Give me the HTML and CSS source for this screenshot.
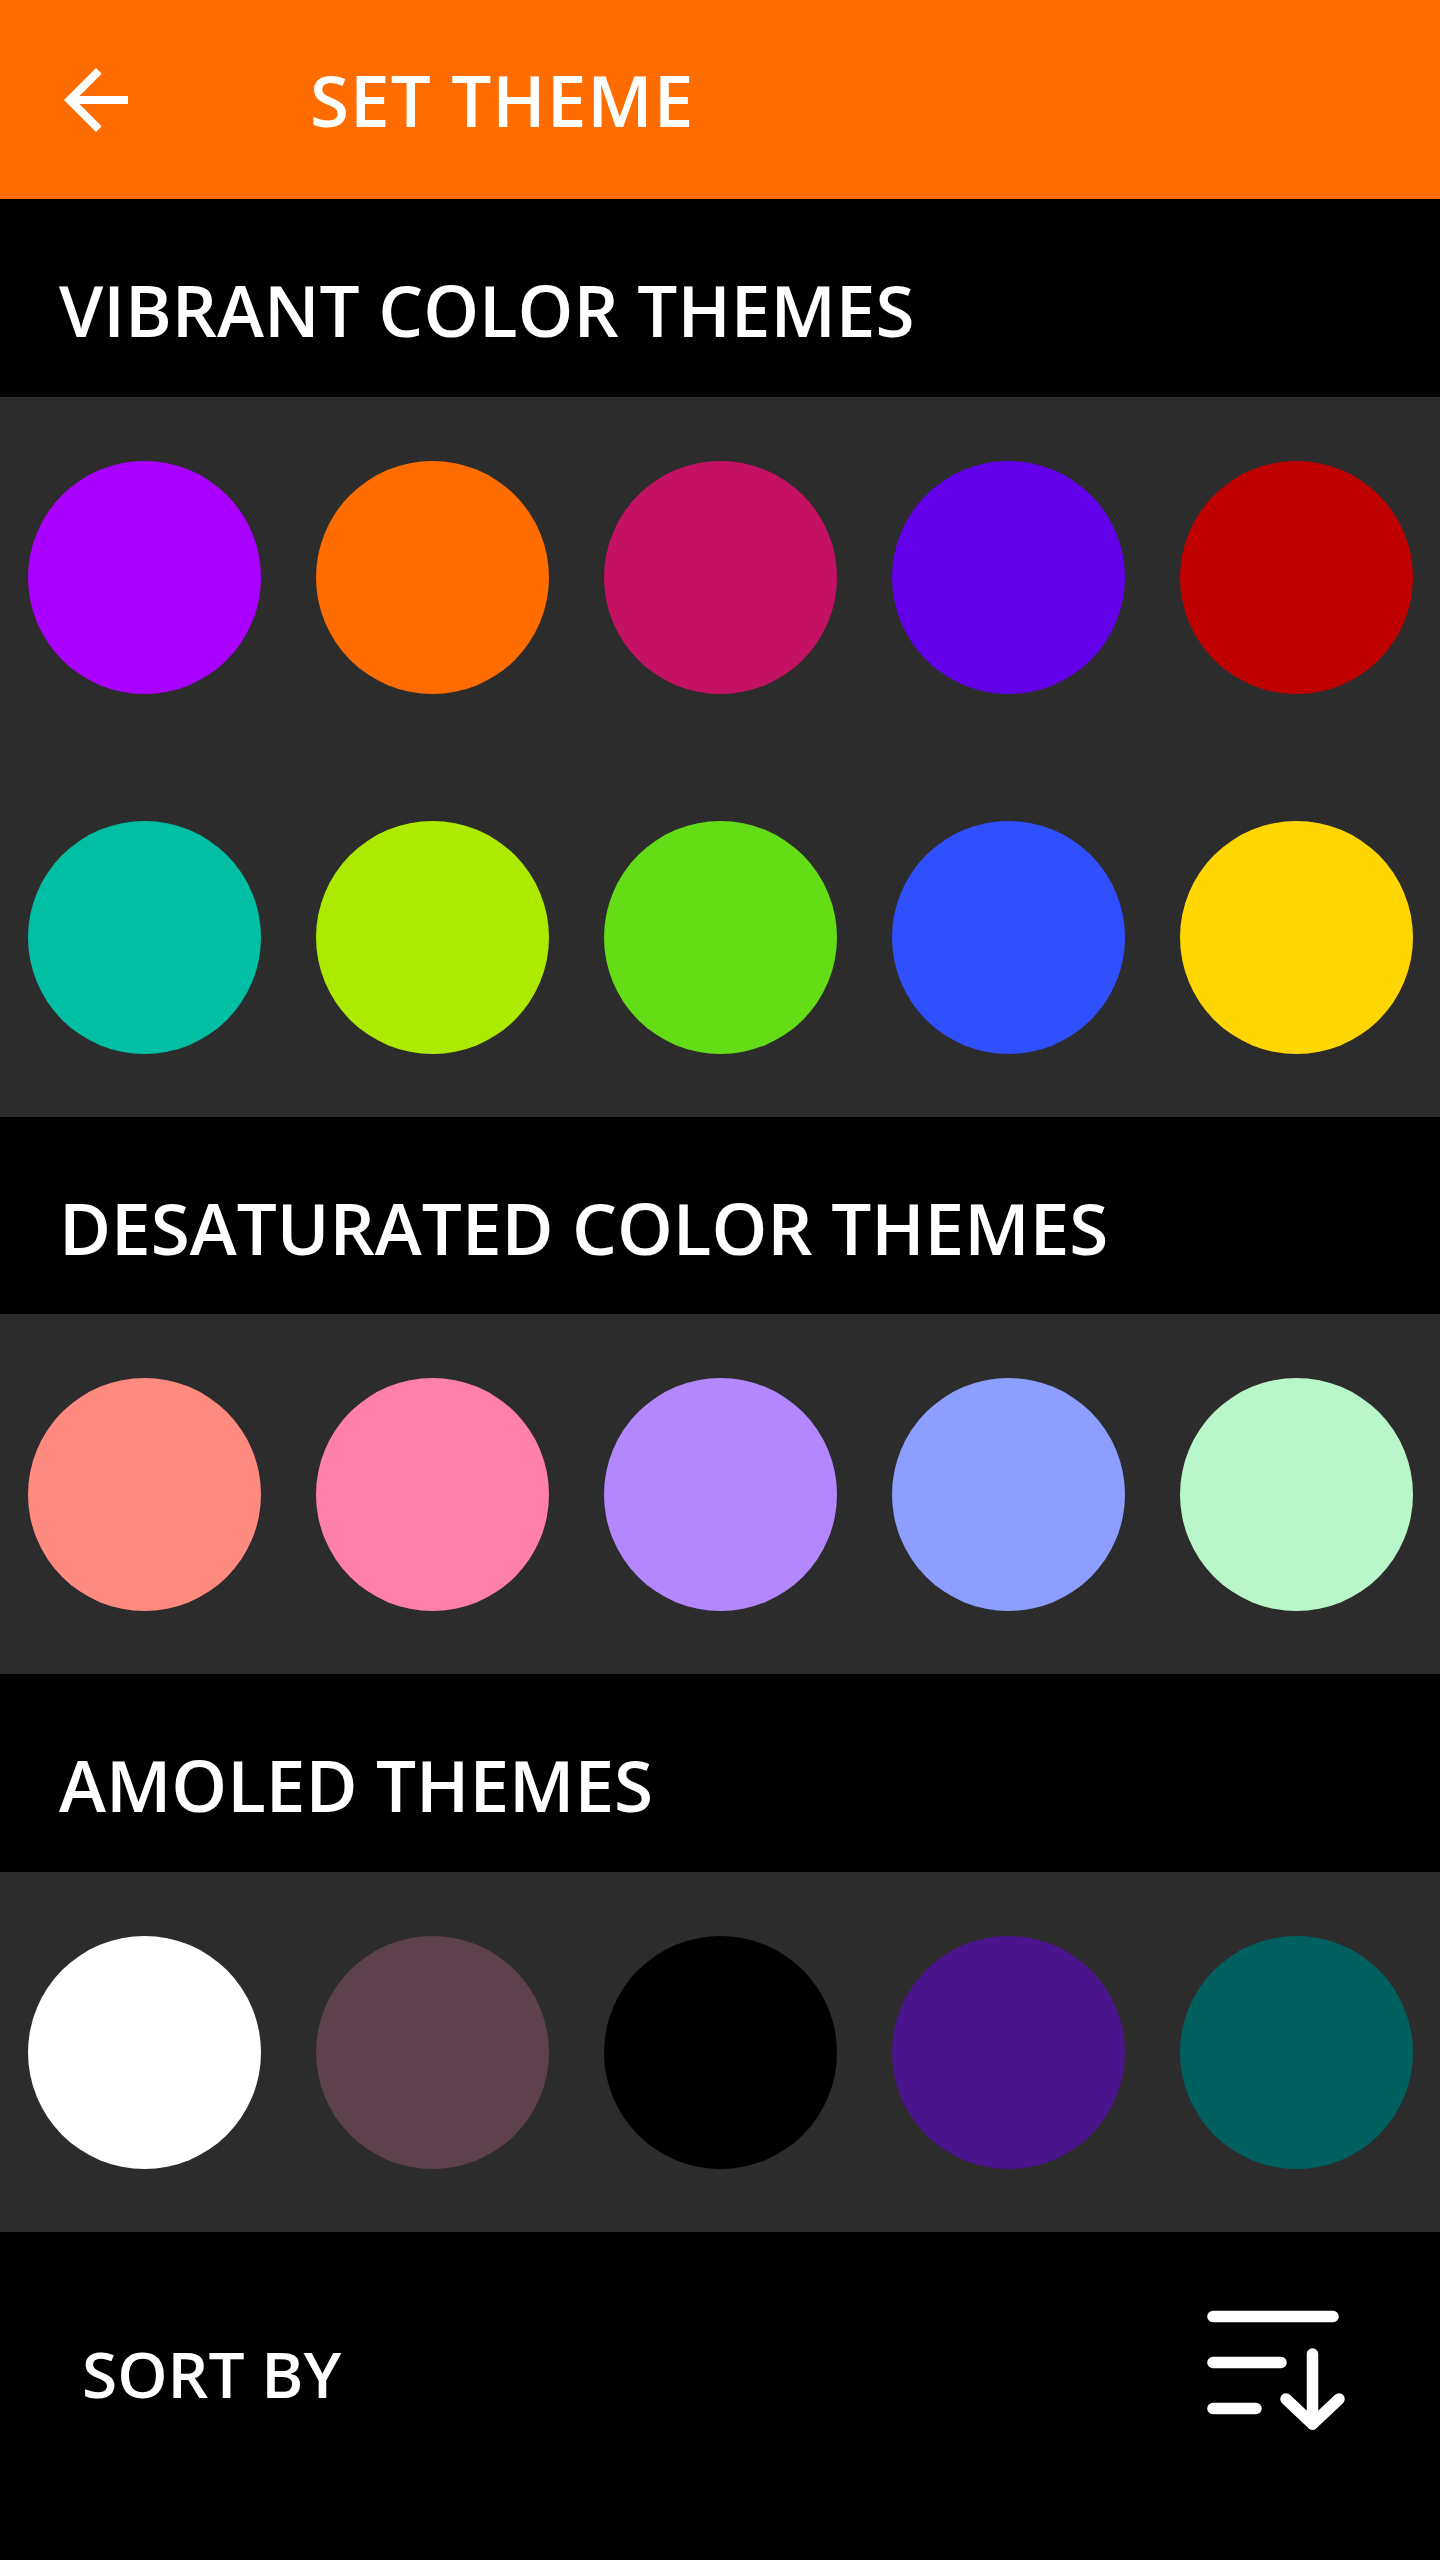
FILE: index.html
```html
<!DOCTYPE html>
<html lang="en">
<head>
<meta charset="utf-8">
<title>Set Theme</title>
<link rel="stylesheet" href="styles.css">
</head>
<body>
<div class="screen">
  <header class="appbar">
    <svg class="back-icon" viewBox="0 0 24 24" width="96" height="96" aria-hidden="true">
      <path d="M20 11H7.83l5.59-5.59L12 4l-8 8 8 8 1.41-1.41L7.83 13H20v-2z" fill="#ffffff"/>
    </svg>
    <h1 class="appbar-title">SET THEME</h1>
  </header>

  <section class="theme-group">
    <h2 class="group-title">VIBRANT COLOR THEMES</h2>
    <div class="swatch-grid">
      <div class="cell"><span class="swatch c-purple"></span></div>
      <div class="cell"><span class="swatch c-orange"></span></div>
      <div class="cell"><span class="swatch c-pink"></span></div>
      <div class="cell"><span class="swatch c-deeppurple"></span></div>
      <div class="cell"><span class="swatch c-red"></span></div>
      <div class="cell"><span class="swatch c-teal"></span></div>
      <div class="cell"><span class="swatch c-lime"></span></div>
      <div class="cell"><span class="swatch c-green"></span></div>
      <div class="cell"><span class="swatch c-indigo"></span></div>
      <div class="cell"><span class="swatch c-yellow"></span></div>
    </div>
  </section>

  <section class="theme-group">
    <h2 class="group-title group-title-mid">DESATURATED COLOR THEMES</h2>
    <div class="swatch-grid">
      <div class="cell"><span class="swatch d-red"></span></div>
      <div class="cell"><span class="swatch d-pink"></span></div>
      <div class="cell"><span class="swatch d-purple"></span></div>
      <div class="cell"><span class="swatch d-indigo"></span></div>
      <div class="cell"><span class="swatch d-green"></span></div>
    </div>
  </section>

  <section class="theme-group">
    <h2 class="group-title">AMOLED THEMES</h2>
    <div class="swatch-grid">
      <div class="cell"><span class="swatch a-white"></span></div>
      <div class="cell"><span class="swatch a-mauve"></span></div>
      <div class="cell"><span class="swatch a-black"></span></div>
      <div class="cell"><span class="swatch a-purple"></span></div>
      <div class="cell"><span class="swatch a-cyan"></span></div>
    </div>
  </section>

  <footer class="sortbar">
    <span class="sort-label">SORT BY</span>
    <svg class="sort-icon" viewBox="0 0 150 140" width="150" height="140" aria-hidden="true">
      <g fill="none" stroke="#ffffff" stroke-width="11.5" stroke-linecap="round" stroke-linejoin="round">
        <line x1="13" y1="13.5" x2="133" y2="13.5"/>
        <line x1="13" y1="59.5" x2="81" y2="59.5"/>
        <line x1="13" y1="105.5" x2="56" y2="105.5"/>
        <line x1="112.5" y1="51" x2="112.5" y2="121"/>
        <polyline points="86,96 112.5,121 139,96"/>
      </g>
    </svg>
  </footer>
</div>
</body>
</html>
```

FILE: styles.css
```css
html, body {
  margin: 0;
  padding: 0;
  background: #000000;
}

.screen {
  width: 1440px;
  min-height: 2560px;
  background: #000000;
  font-family: "Open Sans", "Noto Sans", "Liberation Sans", sans-serif;
  color: #ffffff;
}

.appbar {
  height: 199px;
  background: #ff6d00;
  display: flex;
  align-items: center;
  padding-left: 48px;
  gap: 166px;
  box-sizing: border-box;
}

.back-icon {
  display: block;
  flex: none;
}

.appbar-title {
  margin: 0;
  font-size: 71px;
  font-weight: 600;
  letter-spacing: 1px;
  line-height: normal;
  color: #ffffff;
}

.group-title {
  margin: 0;
  height: 198px;
  box-sizing: border-box;
  padding: 62px 0 0 59px;
  font-size: 71px;
  font-weight: 600;
  line-height: normal;
  color: #ffffff;
  background: #000000;
}

.group-title-mid {
  height: 197px;
}

.swatch-grid {
  display: grid;
  grid-template-columns: repeat(5, 1fr);
  background: #2c2c2c;
}

.cell {
  height: 360px;
  display: flex;
  align-items: center;
  justify-content: center;
}

.swatch {
  display: block;
  width: 233px;
  height: 233px;
  border-radius: 50%;
}

.c-purple { background: #aa00ff; }
.c-orange { background: #ff6d00; }
.c-pink { background: #c51162; }
.c-deeppurple { background: #6200ea; }
.c-red { background: #bf0000; }
.c-teal { background: #00bfa5; }
.c-lime { background: #aeea00; }
.c-green { background: #64dd17; }
.c-indigo { background: #304ffe; }
.c-yellow { background: #ffd600; }

.d-red { background: #ff8a80; }
.d-pink { background: #ff80ab; }
.d-purple { background: #b388ff; }
.d-indigo { background: #8c9eff; }
.d-green { background: #b9f6ca; }

.a-white { background: #ffffff; }
.a-mauve { background: #5d414d; }
.a-black { background: #000000; }
.a-purple { background: #4a148c; }
.a-cyan { background: #006060; }

.sortbar {
  height: 282px;
  display: flex;
  align-items: center;
  justify-content: space-between;
  padding: 0 90px 0 82px;
  box-sizing: border-box;
}

.sort-label {
  font-size: 64px;
  font-weight: 600;
  line-height: normal;
  color: #ffffff;
}

.sort-icon {
  display: block;
  flex: none;
}
```
